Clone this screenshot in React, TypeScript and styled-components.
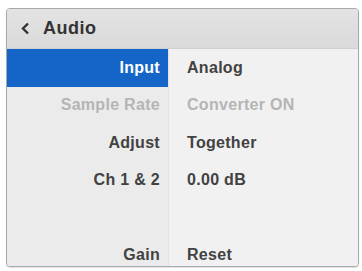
import React from "react";
import styled, { createGlobalStyle } from "styled-components";

const Global = createGlobalStyle`
  html, body { margin: 0; padding: 0; background: #ffffff; }
  body { font-family: "Liberation Sans", Arial, sans-serif; }
`;

const Page = styled.div`
  width: 362px;
  height: 271px;
  padding: 8px 0 0 6px;
  box-sizing: border-box;
`;

const Card = styled.div`
  width: 353px;
  height: 259px;
  box-sizing: border-box;
  border: 1px solid #a9a9a9;
  border-radius: 4px;
  overflow: hidden;
  display: flex;
  flex-direction: column;
  background: #efefef;
  box-shadow: 0 1px 1px rgba(0,0,0,0.12);
`;

const Header = styled.div`
  height: 39px;
  flex: none;
  display: flex;
  align-items: center;
  gap: 13px;
  padding-left: 13px;
  background: linear-gradient(#e3e3e3, #dadada);
  border-bottom: 1px solid #d0d0d0;
  color: #333333;
  font-weight: bold;
  font-size: 18px;
  letter-spacing: 0.5px;
`;

const Body = styled.div`
  flex: 1;
  min-height: 0;
  overflow: hidden;
  display: grid;
  grid-template-columns: 162px 1fr;
  grid-auto-rows: 37.5px;
`;

const Label = styled.div<{ $active?: boolean; $dim?: boolean }>`
  display: flex;
  align-items: center;
  justify-content: flex-end;
  padding-right: 8px;
  font-size: 16px;
  font-weight: bold;
  letter-spacing: 0.3px;
  background: ${(p) => (p.$active ? "#1565c9" : "#ebebeb")};
  color: ${(p) => (p.$active ? "#ffffff" : p.$dim ? "#b5b5b5" : "#424242")};
  border-right: 1px solid #e2e2e2;
`;

const Value = styled.div<{ $dim?: boolean }>`
  display: flex;
  align-items: center;
  padding-left: 18px;
  font-size: 16px;
  font-weight: bold;
  letter-spacing: 0.3px;
  color: ${(p) => (p.$dim ? "#b5b5b5" : "#424242")};
  background: #f1f1f1;
`;

const rows = [
  { label: "Input", value: "Analog", active: true },
  { label: "Sample Rate", value: "Converter ON", dim: true },
  { label: "Adjust", value: "Together" },
  { label: "Ch 1 & 2", value: "0.00 dB" },
  { label: "", value: "" },
  { label: "Gain", value: "Reset" },
];

export default function App() {
  return (
    <>
      <Global />
      <Page>
        <Card>
          <Header>
            <svg width="10" height="13" viewBox="0 0 10 13">
              <path d="M8 1.5 L3 6.5 L8 11.5" fill="none" stroke="#333333" strokeWidth="2.4" />
            </svg>
            <span>Audio</span>
          </Header>
          <Body>
            {rows.map((r, i) => (
              <React.Fragment key={i}>
                <Label $active={r.active} $dim={r.dim}>{r.label}</Label>
                <Value $dim={r.dim}>{r.value}</Value>
              </React.Fragment>
            ))}
          </Body>
        </Card>
      </Page>
    </>
  );
}
